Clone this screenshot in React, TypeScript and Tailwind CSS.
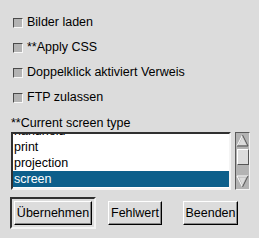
import React from "react";

const options = ["Bilder laden", "**Apply CSS", "Doppelklick aktiviert Verweis", "FTP zulassen"];
const screens = ["handheld", "print", "projection", "screen"];

function Check({ label }: { label: string }) {
  return (
    <div className="flex h-[25px] items-center pl-[13px]">
      <span className="box-border h-[10px] w-[10px] border-[1.5px] border-t-[#4a4a4a] border-l-[#4a4a4a] border-b-[#f8f8f8] border-r-[#f8f8f8] bg-[#b3b3b3]" />
      <span className="ml-[4px] leading-none">{label}</span>
    </div>
  );
}

function Btn({ label, w }: { label: string; w: string }) {
  return (
    <div
      className={`box-border flex h-[24px] items-center justify-center border border-t-white border-l-white border-b-black border-r-black bg-[#dcdcdc] shadow-[inset_-1px_-1px_0_#8a8a8a] ${w}`}
    >
      <span className="leading-none">{label}</span>
    </div>
  );
}

export default function App() {
  return (
    <div
      className="box-border h-[238px] w-[259px] overflow-hidden bg-[#dcdcdc] pt-[10px] text-[12.5px] text-black"
      style={{ fontFamily: '"Liberation Sans", Arial, sans-serif' }}
    >
      {options.map((o) => (
        <Check key={o} label={o} />
      ))}

      <div className="ml-[11px] mt-[6px] h-[15px] leading-[15px]">**Current screen type</div>

      <div className="ml-[11px] mt-[1px] flex h-[58px]">
        <div className="box-border h-[58px] w-[220px] overflow-hidden border-2 border-t-[#303030] border-l-[#303030] border-b-[#f4f4f4] border-r-[#f4f4f4] bg-white">
          <div className="mt-[-11px]">
            {screens.map((s) => (
              <div
                key={s}
                className={`flex h-[16px] items-center pl-[1px] leading-none ${
                  s === "screen" ? "bg-[#0c5f8b] text-white" : ""
                }`}
              >
                {s}
              </div>
            ))}
          </div>
        </div>

        {/* scrollbar */}
        <div className="ml-[4px] box-border flex h-[58px] w-[15px] flex-col items-center border border-t-[#5a5a5a] border-l-[#5a5a5a] border-b-[#f4f4f4] border-r-[#f4f4f4] bg-[#b3b3b3] py-[1px]">
          <svg width="13" height="13" viewBox="0 0 13 13" className="shrink-0">
            <path d="M6.5 1 L1 12" stroke="#fff" strokeWidth="1" fill="none" />
            <path d="M6.5 1 L12 12 L1 12" stroke="#555" strokeWidth="1" fill="none" />
            <path d="M6.5 3 L2.5 11 L10.5 11 Z" fill="#dcdcdc" />
          </svg>
          <div className="mt-[2px] box-border h-[16px] w-[12px] shrink-0 border border-t-white border-l-white border-b-[#555] border-r-[#555] bg-[#dcdcdc]" />
          <div className="flex-1" />
          <svg width="13" height="13" viewBox="0 0 13 13" className="shrink-0">
            <path d="M1 1 L12 1" stroke="#fff" strokeWidth="1" fill="none" />
            <path d="M1 1 L6.5 12" stroke="#fff" strokeWidth="1" fill="none" />
            <path d="M6.5 12 L12 1" stroke="#555" strokeWidth="1" fill="none" />
            <path d="M3 2.5 L10 2.5 L6.5 10 Z" fill="#dcdcdc" />
          </svg>
        </div>
      </div>

      <div className="mt-[7px] flex items-start pl-[10px]">
        <div className="box-border border-2 border-t-[#303030] border-l-[#303030] border-b-[#f4f4f4] border-r-[#f4f4f4] p-[2px]">
          <Btn label="Übernehmen" w="w-[78px]" />
        </div>
        <div className="ml-[12px] mt-[4px]">
          <Btn label="Fehlwert" w="w-[54px]" />
        </div>
        <div className="ml-[21px] mt-[4px]">
          <Btn label="Beenden" w="w-[55px]" />
        </div>
      </div>
    </div>
  );
}
